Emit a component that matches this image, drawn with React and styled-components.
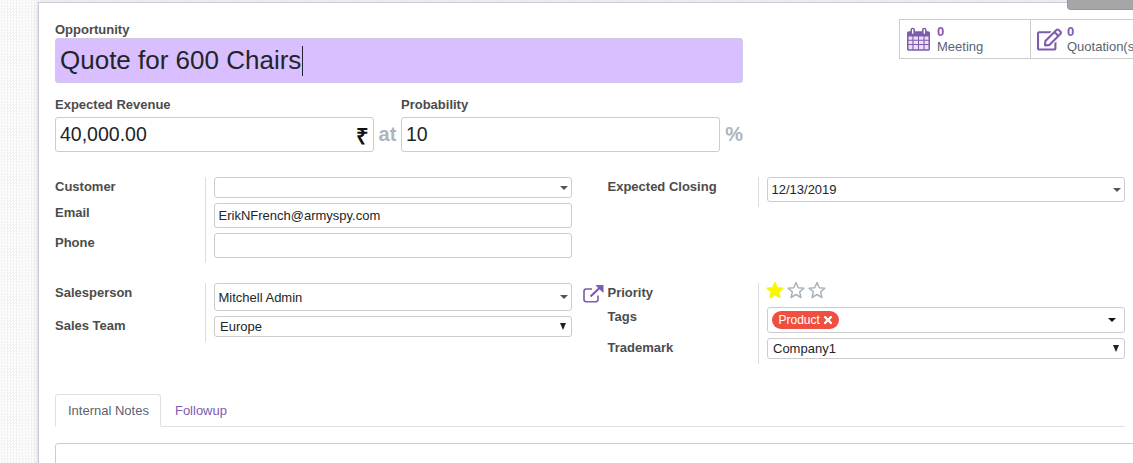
import styled, { createGlobalStyle } from "styled-components";
import { FaRegEdit, FaTimes } from "react-icons/fa";

const GlobalStyle = createGlobalStyle`
  html, body {
    margin: 0;
    padding: 0;
    background: #fff;
    font-family: "Liberation Sans", Arial, sans-serif;
  }
`

const purple = "#7e5bad"

const Page = styled.div`
  position: relative;
  width: 1133px;
  height: 463px;
  overflow: hidden;
  padding: 2px 0 0 38px;
  box-sizing: border-box;
  background: repeating-conic-gradient(#f2f2f2 0 25%, #ffffff 0 50%) 0 0 / 3px 3px;
`

const Handle = styled.div`
  position: absolute;
  top: 0;
  right: 0;
  width: 66px;
  height: 10px;
  background: #a6a6a6;
  border-bottom-left-radius: 4px;
  border-left: 1px solid #989898;
  border-bottom: 1px solid #989898;
  box-sizing: border-box;
`

const Sheet = styled.div`
  width: 1095px;
  height: 480px;
  box-sizing: border-box;
  background: #fff;
  border: 1px solid #cbc9dc;
  border-right: none;
  box-shadow: 0 0 6px rgba(0, 0, 0, 0.14);
  padding: 17px 8px 0 16px;
`

const Header = styled.div`
  display: flex;
  gap: 156px;
  align-items: flex-start;
`

const TitleBlock = styled.div`
  flex: 0 0 688px;
`

const Label = styled.div`
  font-size: 13px;
  height: 18px;
  line-height: 20px;
  font-weight: 700;
  color: #4c4c4c;
  white-space: nowrap;
`

const TitleInput = styled.div`
  height: 45px;
  box-sizing: border-box;
  display: flex;
  align-items: center;
  padding: 0 0 0 4px;
  background: #d9bfff;
  border: 1px solid #d2c9e6;
  border-radius: 3px;
  font-size: 26px;
  color: #212529;
`

const Caret = styled.span`
  display: inline-block;
  width: 1px;
  height: 30px;
  background: #212529;
  margin-left: 1px;
`

const AmountRow = styled.div`
  display: flex;
  margin-top: 12px;
`

const AmountField = styled.div`
  flex: 0 0 319px;
`

const AmountInput = styled.div`
  margin-top: 4px;
  height: 35px;
  box-sizing: border-box;
  display: flex;
  align-items: center;
  justify-content: space-between;
  padding: 0 4px;
  border: 1px solid #cccccc;
  border-radius: 3px;
  font-size: 19.5px;
  color: #212529;
`

const Currency = styled.span`
  font-size: 22px;
  font-weight: 700;
  color: #111;
`

const Joiner = styled.div`
  flex: 0 0 ${({ $width }) => $width}px;
  align-self: flex-end;
  height: 35px;
  display: flex;
  align-items: center;
  justify-content: ${({ $end }) => ($end ? "flex-end" : "center")};
  font-size: 20px;
  font-weight: 700;
  color: #adb5bd;
`

const ButtonBox = styled.div`
  flex: none;
  display: flex;
  margin-top: -1px;
  height: 40px;
  box-sizing: border-box;
  border: 1px solid #cccccc;
`

const StatButton = styled.div`
  width: 131px;
  box-sizing: border-box;
  display: flex;
  align-items: center;
  padding-left: 6px;
  border-right: 1px solid #cccccc;
  &:last-child {
    border-right: none;
  }
`

const StatIcon = styled.div`
  flex: 0 0 ${({ $width }) => $width}px;
  display: flex;
  align-items: center;
`

const StatText = styled.div`
  display: flex;
  flex-direction: column;
  font-size: 13px;
  line-height: 15px;
  color: #5b6470;
`

const StatValue = styled.span`
  font-weight: 700;
  color: ${purple};
`

const Columns = styled.div`
  display: flex;
  gap: 35.5px;
  margin-top: ${({ $top }) => $top}px;
`

const Group = styled.div`
  flex: 0 0 ${({ $width }) => $width}px;
`

const FieldRow = styled.div`
  display: grid;
  grid-template-columns: 150px 1fr;
`

const RightRow = styled(FieldRow)`
  grid-template-columns: 150.5px 1fr;
`

const FieldLabel = styled(Label)`
  position: relative;
`

const LinkIcon = styled.svg`
  position: absolute;
  left: -25px;
  top: 2px;
`

const FieldValue = styled.div`
  border-left: 1px solid #dcdcdc;
  padding: 0 0 5px 8px;
`

const Input = styled.div`
  height: ${({ $height }) => $height}px;
  box-sizing: border-box;
  display: flex;
  align-items: center;
  justify-content: space-between;
  padding: ${({ $pad }) => $pad || "0 3px 0 3.5px"};
  border: 1px solid #cccccc;
  border-radius: 3px;
  font-size: 13px;
  color: #212529;
`

const Arrow = styled.span`
  width: 0;
  height: 0;
  margin-right: ${({ $right }) => $right || 0}px;
  border-left: 4px solid transparent;
  border-right: 4px solid transparent;
  border-top: 4px solid ${({ $dark }) => ($dark ? "#111" : "#555")};
`

const NativeArrow = styled.span`
  width: 0;
  height: 0;
  border-left: 3px solid transparent;
  border-right: 3px solid transparent;
  border-top: 7px solid #222;
`

const Stars = styled.div`
  height: 21px;
  margin: -2px 0 0 -1px;
  display: flex;
  gap: 3px;
`

const Tag = styled.span`
  display: inline-flex;
  align-items: center;
  gap: 2px;
  height: 18px;
  padding: 0 5px 0 7px;
  border-radius: 9px;
  background: #f04e40;
  color: #fff;
  font-size: 12px;
`

const Tabs = styled.div`
  display: flex;
  box-sizing: border-box;
  margin-top: 30px;
  height: 33px;
  border-bottom: 1px solid #dee2e6;
`

const Tab = styled.div`
  box-sizing: border-box;
  height: ${({ $active }) => ($active ? 33 : 32)}px;
  padding: 0 ${({ $active }) => ($active ? "11px" : "12px")} 0 12px;
  display: flex;
  align-items: center;
  font-size: 13px;
  color: ${({ $active }) => ($active ? "#5b6470" : purple)};
  background: ${({ $active }) => ($active ? "#fff" : "transparent")};
  border: 1px solid ${({ $active }) => ($active ? "#dee2e6" : "transparent")};
  border-bottom-color: ${({ $active }) => ($active ? "#fff" : "transparent")};
  border-radius: 3px 3px 0 0;
  margin-left: ${({ $active }) => ($active ? 0 : 1)}px;
`

const Editor = styled.div`
  margin: 16px -40px 0 0;
  height: 60px;
  border: 1px solid #cccccc;
  border-radius: 3px;
`

function CalendarIcon() {
  return (
    <svg width="24" height="24" viewBox="-1 0 24 24">
      <path fill={purple} d="M0 6c0-1 .8-1.8 1.8-1.8H3.5V3c0-1.4 1-2.3 2.2-2.3S8 1.6 8 3v1.2h7V3c0-1.4 1-2.3 2.3-2.3s2.2.9 2.2 2.3v1.2h1.7c1 0 1.8.8 1.8 1.8v16c0 1-.8 1.800-1.800 1.800H1.800C.8 23.800 0 23 0 22z" />
      <path fill="#fff" d="M5 2.600c0-.4.3-.7.7-.7s.7.3.7.7v3.600c0 .4-.3.7-.7.7S5 6.600 5 6.200zM16.600 2.600c0-.4.3-.7.7-.7s.7.3.7.7v3.600c0 .4-.3.7-.7.7s-.7-.3-.7-.7z" />
      <path fill="#e9e0f5" d="M1.500 9.500h3.900v3.200H1.500zM6.500 9.500h4.500v3.200H6.500zM12 9.500h4.500v3.200H12zM17.600 9.500h3.900v3.200h-3.900zM1.500 13.700h3.900v3.200H1.500zM6.500 13.700h4.500v3.200H6.500zM12 13.700h4.500v3.200H12zM17.600 13.700h3.900v3.200h-3.900zM1.500 18h3.900v4.300H1.500zM6.500 18h4.500v4.300H6.500zM12 18h4.500v4.300H12zM17.600 18h3.900v4.300h-3.900z" />
    </svg>
  )
}

function Star({ filled }) {
  return (
    <svg width="18" height="18" viewBox="0 0 24 24">
      <polygon
        points="12,2 15,9 22.5,9.6 16.8,14.5 18.6,22 12,18 5.4,22 7.2,14.5 1.5,9.6 9,9"
        fill={filled ? "#f7f700" : "#fff"}
        stroke={filled ? "#f7f700" : "#a9b4bd"}
        strokeWidth="2"
        strokeLinejoin="round"
      />
    </svg>
  )
}

function App() {
  return (
    <Page>
      <GlobalStyle />
      <Handle />
      <Sheet>
        <Header>
          <TitleBlock>
            <Label>Opportunity</Label>
            <TitleInput>
              Quote for 600 Chairs<Caret />
            </TitleInput>
            <AmountRow>
              <AmountField>
                <Label>Expected Revenue</Label>
                <AmountInput>
                  40,000.00
                  <Currency>₹</Currency>
                </AmountInput>
              </AmountField>
              <Joiner $width={27}>at</Joiner>
              <AmountField>
                <Label>Probability</Label>
                <AmountInput>10</AmountInput>
              </AmountField>
              <Joiner $width={23} $end>%</Joiner>
            </AmountRow>
          </TitleBlock>
          <ButtonBox>
            <StatButton>
              <StatIcon $width={31}>
                <CalendarIcon />
              </StatIcon>
              <StatText>
                <StatValue>0</StatValue>
                Meeting
              </StatText>
            </StatButton>
            <StatButton>
              <StatIcon $width={30}>
                <FaRegEdit size={25} color={purple} />
              </StatIcon>
              <StatText>
                <StatValue>0</StatValue>
                Quotation(s)
              </StatText>
            </StatButton>
          </ButtonBox>
        </Header>

        <Columns $top={25}>
          <Group $width={517}>
            <FieldRow>
              <Label>Customer</Label>
              <FieldValue>
                <Input $height={21}>
                  <span />
                  <Arrow />
                </Input>
              </FieldValue>
            </FieldRow>
            <FieldRow>
              <Label>Email</Label>
              <FieldValue>
                <Input $height={25}>ErikNFrench@armyspy.com</Input>
              </FieldValue>
            </FieldRow>
            <FieldRow>
              <Label>Phone</Label>
              <FieldValue>
                <Input $height={25} />
              </FieldValue>
            </FieldRow>
          </Group>
          <Group $width={517.5}>
            <RightRow>
              <Label>Expected Closing</Label>
              <FieldValue>
                <Input $height={25}>
                  12/13/2019
                  <Arrow />
                </Input>
              </FieldValue>
            </RightRow>
          </Group>
        </Columns>

        <Columns $top={20}>
          <Group $width={517}>
            <FieldRow>
              <Label>Salesperson</Label>
              <FieldValue>
                <Input $height={28}>
                  Mitchell Admin
                  <Arrow />
                </Input>
              </FieldValue>
            </FieldRow>
            <FieldRow>
              <Label>Sales Team</Label>
              <FieldValue>
                <Input $height={21} $pad="0 5px 0 5px">
                  Europe
                  <NativeArrow />
                </Input>
              </FieldValue>
            </FieldRow>
          </Group>
          <Group $width={517.5}>
            <RightRow>
              <FieldLabel>
                <LinkIcon width="21" height="18" viewBox="0 0 21 18" fill="none" stroke={purple} strokeWidth="1.6">
                  <path d="M15 10.500V14.500a2.300 2.300 0 0 1-2.300 2.300H3.200A2.300 2.300 0 0 1 1 14.500V6.300A2.300 2.300 0 0 1 3.200 4H9" />
                  <path d="M7.500 11.500 17 2.500" strokeWidth="2.200" />
                  <path fill={purple} stroke="none" d="M12.500 0H20.500V8L17.500 5.200 15 3z" />
                </LinkIcon>
                Priority
              </FieldLabel>
              <FieldValue>
                <Stars>
                  <Star filled />
                  <Star />
                  <Star />
                </Stars>
              </FieldValue>
            </RightRow>
            <RightRow>
              <Label>Tags</Label>
              <FieldValue>
                <Input $height={26}>
                  <Tag>
                    Product <FaTimes size={12} />
                  </Tag>
                  <Arrow $dark $right={5} />
                </Input>
              </FieldValue>
            </RightRow>
            <RightRow>
              <Label>Trademark</Label>
              <FieldValue>
                <Input $height={21} $pad="0 5px 0 5px">
                  Company1
                  <NativeArrow />
                </Input>
              </FieldValue>
            </RightRow>
          </Group>
        </Columns>

        <Tabs>
          <Tab $active>Internal Notes</Tab>
          <Tab>Followup</Tab>
        </Tabs>
        <Editor />
      </Sheet>
    </Page>
  )
}

export default App;
